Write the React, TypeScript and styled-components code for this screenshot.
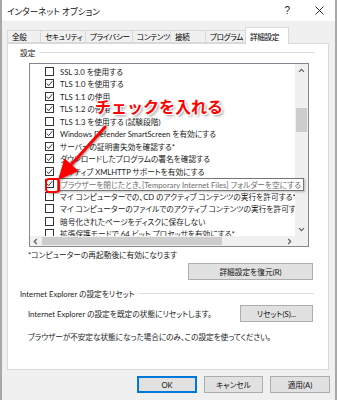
import styled, { createGlobalStyle } from 'styled-components';

const GlobalStyle = createGlobalStyle`
  html, body { margin: 0; padding: 0; background: #fff; }
  body {
    font-family: Lato, "Noto Sans CJK JP", sans-serif;
    font-feature-settings: "palt";
    color: #000;
  }
`;

const tabs = [
  { label: '全般', width: 34 },
  { label: 'セキュリティ', width: 46 },
  { label: 'プライバシー', width: 48 },
  { label: 'コンテンツ', width: 39 },
  { label: '接続', width: 36 },
  { label: 'プログラム', width: 41 },
  { label: '詳細設定', width: 44, active: true },
];

const settings = [
  { label: 'SSL 3.0 を使用する', checked: false },
  { label: 'TLS 1.0 を使用する', checked: true },
  { label: 'TLS 1.1 の使用', checked: true },
  { label: 'TLS 1.2 の使用', checked: true },
  { label: 'TLS 1.3 を使用する (試験段階)', checked: false },
  { label: 'Windows Defender SmartScreen を有効にする', checked: true },
  { label: 'サーバーの証明書失効を確認する*', checked: true },
  { label: 'ダウンロードしたプログラムの署名を確認する', checked: true },
  { label: 'ネイティブ XMLHTTP サポートを有効にする', checked: true },
  { label: 'ブラウザーを閉じたとき、[Temporary Internet Files] フォルダーを空にする', checked: true },
  { label: 'マイ コンピューターでの、CD のアクティブ コンテンツの実行を許可する*', checked: false },
  { label: 'マイ コンピューターのファイルでのアクティブ コンテンツの実行を許可する*', checked: false },
  { label: '暗号化されたページをディスクに保存しない', checked: false },
  { label: '拡張保護モードで 64 ビット プロセッサを有効にする*', checked: false },
];

function Chevron({ dir }: { dir: 'up' | 'down' | 'left' | 'right' }) {
  const rot = { up: 0, right: 90, down: 180, left: 270 }[dir];
  return (
    <svg width="7" height="7" viewBox="0 0 7 7" style={{ transform: `rotate(${rot}deg)` }}>
      <polyline points="1,4.8 3.5,2.3 6,4.8" fill="none" stroke="#606060" strokeWidth="1.2" />
    </svg>
  );
}

function App() {
  return (
    <>
      <GlobalStyle />
      <Dialog>
        <TitleBar>
          <Title>インターネット オプション</Title>
          <TitleButtons>
            <Help>?</Help>
            <svg width="9" height="9" viewBox="0 0 9 9">
              <path d="M0.5 0.5 L8.5 8.5 M8.5 0.5 L0.5 8.5" stroke="#111" strokeWidth="0.9" />
            </svg>
          </TitleButtons>
        </TitleBar>
        <Body>
          <TabStrip>
            {tabs.map((t) => (
              <Tab key={t.label} $w={t.width} $active={t.active}>{t.label}</Tab>
            ))}
          </TabStrip>
          <Panel>
            <GroupHeader>
              <span>設定</span>
              <GroupLine />
            </GroupHeader>
            <ListBox>
              <ListRows>
                {settings.map((s) => (
                  <Row key={s.label}>
                    <Checkbox>
                      {s.checked && (
                        <svg width="7" height="7" viewBox="0 0 7 7">
                          <polyline points="0.8,3.6 2.7,5.6 6.3,1.2" fill="none" stroke="#222" strokeWidth="0.9" />
                        </svg>
                      )}
                    </Checkbox>
                    <span>{s.label}</span>
                  </Row>
                ))}
              </ListRows>
              <VScroll>
                <ArrowCell $h={13}><Chevron dir="up" /></ArrowCell>
                <VTrack><VThumb /></VTrack>
                <ArrowCell $h={13}><Chevron dir="down" /></ArrowCell>
              </VScroll>
              <HScroll>
                <ArrowCell $w={11}><Chevron dir="left" /></ArrowCell>
                <HTrack><HThumb /></HTrack>
                <ArrowCell $w={11}><Chevron dir="right" /></ArrowCell>
              </HScroll>
              <Corner />
              <Tooltip>ブラウザーを閉じたとき、[Temporary Internet Files] フォルダーを空にする</Tooltip>
            </ListBox>
            <Note>*コンピューターの再起動後に有効になります</Note>
            <RightAlign>
              <Button $w={125}>詳細設定を復元(R)</Button>
            </RightAlign>
            <GroupHeader $top={7}>
              <span>Internet Explorer の設定をリセット</span>
              <GroupLine />
            </GroupHeader>
            <ResetRow>
              <span>Internet Explorer の設定を既定の状態にリセットします。</span>
              <Button $w={73}>リセット(S)...</Button>
            </ResetRow>
            <Hint>ブラウザーが不安定な状態になった場合にのみ、この設定を使ってください。</Hint>
          </Panel>
          <Footer>
            <Button $w={60} $default>OK</Button>
            <Button $w={59}>キャンセル</Button>
            <Button $w={60}>適用(A)</Button>
          </Footer>
        </Body>

        <Callout>チェックを入れる</Callout>
        <Arrow width="60" height="64" viewBox="0 0 60 64">
          <line x1="53" y1="5" x2="18" y2="44" stroke="#f00" strokeWidth="3" strokeLinecap="round" />
          <polygon points="6,58 12.5,36.5 26.5,49" fill="#f00" />
        </Arrow>
        <Ring />
      </Dialog>
    </>
  );
}
export default App;

const Dialog = styled.div`
  position: relative;
  width: 337px;
  height: 400px;
  box-sizing: border-box;
  background: #f0f0f0;
  border-left: 2px solid #a8a8a8;
  border-right: 2px solid #a8a8a8;
  font-size: 7.7px;
  overflow: hidden;
`;

const TitleBar = styled.div`
  height: 21px;
  background: #fff;
  display: flex;
  align-items: center;
  justify-content: space-between;
  padding: 0 11px 0 5px;
`;

const Title = styled.div`
  font-size: 8.6px;
  color: #111;
`;

const TitleButtons = styled.div`
  display: flex;
  align-items: center;
  gap: 25px;
`;

const Help = styled.span`
  font-family: "Liberation Sans", sans-serif;
  font-size: 10px;
  color: #222;
`;

const Body = styled.div`
  padding: 6px 5px 0 5px;
`;

const TabStrip = styled.div`
  display: flex;
  align-items: flex-end;
  height: 16px;
  position: relative;
  z-index: 1;
`;

const Tab = styled.div<{ $w: number; $active?: boolean }>`
  width: ${(p) => p.$w}px;
  height: ${(p) => (p.$active ? 17 : 13)}px;
  margin-left: -1px;
  margin-bottom: ${(p) => (p.$active ? -1 : 0)}px;
  box-sizing: border-box;
  border: 1px solid #d9d9d9;
  border-bottom: ${(p) => (p.$active ? 'none' : '1px solid #d9d9d9')};
  background: ${(p) => (p.$active ? '#fff' : '#f0f0f0')};
  padding-left: 4px;
  font-size: 7.6px;
  letter-spacing: -0.35px;
  display: flex;
  align-items: center;
  white-space: nowrap;
  &:first-child { margin-left: 0; }
`;

const Panel = styled.div`
  height: 327px;
  margin-right: 1px;
  box-sizing: border-box;
  background: #fff;
  border: 1px solid #d9d9d9;
  padding: 2px 14px 0 12px;
  display: flex;
  flex-direction: column;
`;

const GroupHeader = styled.div<{ $top?: number }>`
  display: flex;
  align-items: center;
  gap: 5px;
  height: 12px;
  margin-top: ${(p) => p.$top ?? 0}px;
  color: #222;
  white-space: nowrap;
`;

const GroupLine = styled.div`
  flex: 1;
  height: 1px;
  background: #dcdcdc;
`;

const ListBox = styled.div`
  position: relative;
  margin: 5px 5px 0 9px;
  height: 184px;
  box-sizing: border-box;
  border: 1px solid #828790;
  display: grid;
  grid-template-columns: 1fr 13px;
  grid-template-rows: 1fr 10px;
`;

const ListRows = styled.div`
  overflow: hidden;
  padding-top: 1px;
  background: #fff;
`;

const Row = styled.div`
  height: 12.5px;
  display: flex;
  align-items: center;
  gap: 6px;
  padding-left: 15px;
  white-space: nowrap;
  color: #1a1a1a;
`;

const Checkbox = styled.div`
  flex: none;
  width: 9px;
  height: 9px;
  box-sizing: border-box;
  border: 1px solid #333;
  background: #fff;
  display: flex;
  align-items: center;
  justify-content: center;
`;

const VScroll = styled.div`
  background: #f0f0f0;
  display: flex;
  flex-direction: column;
`;

const HScroll = styled.div`
  background: #f0f0f0;
  display: flex;
`;

const Corner = styled.div`
  background: #f0f0f0;
`;

const ArrowCell = styled.div<{ $w?: number; $h?: number }>`
  flex: none;
  width: ${(p) => (p.$w ? `${p.$w}px` : 'auto')};
  height: ${(p) => (p.$h ? `${p.$h}px` : 'auto')};
  display: flex;
  align-items: center;
  justify-content: center;
`;

const VTrack = styled.div`
  flex: 1;
  padding: 31px 1px 0;
`;

const VThumb = styled.div`
  height: 24px;
  background: #cdcdcd;
`;

const HTrack = styled.div`
  flex: 1;
  padding: 1px 0 1px 1px;
  display: flex;
`;

const HThumb = styled.div`
  width: 180px;
  background: #cdcdcd;
`;

const Tooltip = styled.div`
  position: absolute;
  left: 27px;
  top: 114px;
  width: 247px;
  height: 13px;
  box-sizing: border-box;
  border: 1px solid #767676;
  background: #fff;
  box-shadow: 1px 1px 2px rgba(0, 0, 0, 0.25);
  color: #6d6d6d;
  padding-left: 3px;
  display: flex;
  align-items: center;
  white-space: nowrap;
  overflow: hidden;
`;

const Note = styled.div`
  margin: 1px 0 0 8px;
  height: 12px;
  display: flex;
  align-items: center;
  color: #222;
`;

const RightAlign = styled.div`
  display: flex;
  justify-content: flex-end;
  margin: 3px 1px 0 0;
`;

const Button = styled.div<{ $w: number; $default?: boolean }>`
  width: ${(p) => p.$w}px;
  height: 17px;
  box-sizing: border-box;
  border: ${(p) => (p.$default ? '2px solid #0078d7' : '1px solid #adadad')};
  background: #e1e1e1;
  display: flex;
  align-items: center;
  justify-content: center;
  color: #111;
  white-space: nowrap;
`;

const ResetRow = styled.div`
  display: flex;
  align-items: center;
  justify-content: space-between;
  margin: 6px 1px 0 8px;
  color: #222;
`;

const Hint = styled.div`
  margin: 8px 0 0 8px;
  height: 12px;
  display: flex;
  align-items: center;
  color: #222;
  letter-spacing: -0.1px;
`;

const Footer = styled.div`
  display: flex;
  justify-content: flex-end;
  gap: 7px;
  margin-top: 6px;
`;

const Callout = styled.div`
  position: absolute;
  left: 93px;
  top: 95px;
  font-family: "Noto Sans CJK JP", sans-serif;
  font-size: 16px;
  font-weight: 700;
  font-feature-settings: normal;
  line-height: 22px;
  color: #ff0000;
  white-space: nowrap;
  text-shadow:
    1px 0 0 #fff, -1px 0 0 #fff, 0 1px 0 #fff, 0 -1px 0 #fff,
    1px 1px 0 #fff, -1px -1px 0 #fff, 1px -1px 0 #fff, -1px 1px 0 #fff,
    2px 2px 3px rgba(0, 0, 0, 0.45);
`;

const Arrow = styled.svg`
  position: absolute;
  left: 50px;
  top: 122px;
  filter: drop-shadow(1px 1px 1px rgba(0, 0, 0, 0.4));
`;

const Ring = styled.div`
  position: absolute;
  left: 43px;
  top: 178px;
  width: 15px;
  height: 15px;
  box-sizing: border-box;
  border: 2px solid #f00;
  border-radius: 4px;
  box-shadow: 1px 1px 2px rgba(0, 0, 0, 0.3);
`;
